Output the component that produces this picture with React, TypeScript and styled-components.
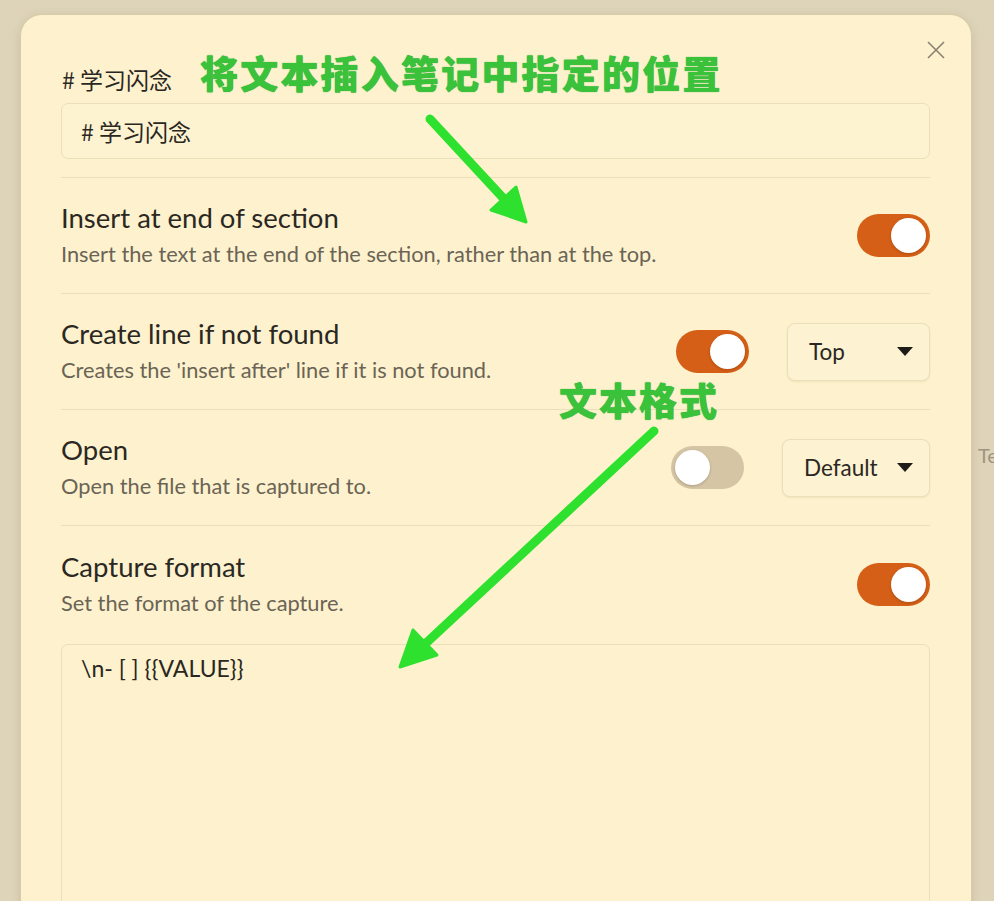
import React from "react";
import styled, { createGlobalStyle } from "styled-components";

const GlobalStyle = createGlobalStyle`
  html, body {
    margin: 0;
    padding: 0;
    background: #ded4b9;
    overflow: hidden;
  }
  body {
    font-family: Lato, "Noto Sans CJK SC", sans-serif;
    color: #2a2722;
  }
`;

type SettingProps = {
  title: string;
  desc: string;
  on: boolean;
  select?: { label: string; width: number };
  last?: boolean;
};

const settings: SettingProps[] = [
  {
    title: "Insert at end of section",
    desc: "Insert the text at the end of the section, rather than at the top.",
    on: true,
  },
  {
    title: "Create line if not found",
    desc: "Creates the 'insert after' line if it is not found.",
    on: true,
    select: { label: "Top", width: 143 },
  },
  {
    title: "Open",
    desc: "Open the file that is captured to.",
    on: false,
    select: { label: "Default", width: 148 },
  },
  {
    title: "Capture format",
    desc: "Set the format of the capture.",
    on: true,
    last: true,
  },
];

const Setting = ({ title, desc, on, select, last }: SettingProps) => {
  return (
    <SettingRow $last={last}>
      <div className="info">
        <div className="title">{title}</div>
        <div className="desc">{desc}</div>
      </div>
      <Controls>
        <Toggle $on={on}>
          <span />
        </Toggle>
        {select && (
          <Dropdown $width={select.width}>
            <span>{select.label}</span>
            <Caret />
          </Dropdown>
        )}
      </Controls>
    </SettingRow>
  );
};

const App = () => {
  return (
    <Page>
      <GlobalStyle />
      <Modal>
        <CloseButton aria-label="close">
          <svg width="18" height="18" viewBox="0 0 18 18">
            <path d="M1 1 L17 17 M17 1 L1 17" stroke="#8a8170" strokeWidth="1.6" />
          </svg>
        </CloseButton>
        <HeadingLabel># 学习闪念</HeadingLabel>
        <TextInput># 学习闪念</TextInput>
        <Divider />
        {settings.map((s) => (
          <Setting key={s.title} {...s} />
        ))}
        <FormatArea>{"\\n- [ ] {{VALUE}}"}</FormatArea>
      </Modal>
      <SidePeek>Te</SidePeek>

      <Note $x={200} $y={47} $spacing={2.2}>将文本插入笔记中指定的位置</Note>
      <Note $x={559} $y={374} $spacing={2}>文本格式</Note>
      <ArrowLayer width="994" height="901" viewBox="0 0 994 901">
        <g stroke="#2ee12e" strokeWidth="9" strokeLinecap="round" fill="#2ee12e">
          <line x1="430" y1="119" x2="505" y2="200" />
          <polygon points="526,222 491,210 516,187" strokeWidth="3" strokeLinejoin="round" />
          <line x1="654" y1="431" x2="424" y2="645" />
          <polygon points="400,667 413,630 437,655" strokeWidth="3" strokeLinejoin="round" />
        </g>
      </ArrowLayer>
    </Page>
  );
};

export default App;

const Page = styled.div`
  position: relative;
  display: flex;
  align-items: flex-start;
  width: 994px;
  height: 901px;
  overflow: hidden;
  padding: 14px 0 0 20px;
  box-sizing: border-box;
`;

const Modal = styled.div`
  position: relative;
  flex-shrink: 0;
  width: 952px;
  min-height: 960px;
  box-sizing: border-box;
  padding: 50px 41px 0 40px;
  background: #fdf2cd;
  border: 1px solid #d9cda9;
  border-radius: 22px;
  box-shadow: 0 2px 10px rgba(120, 100, 60, 0.18);
`;

const CloseButton = styled.div`
  position: absolute;
  top: 26px;
  right: 26px;
  width: 18px;
  height: 18px;
  display: flex;
`;

const HeadingLabel = styled.div`
  font-family: "Noto Sans CJK SC", sans-serif;
  font-size: 23px;
  line-height: 28px;
  color: #2a2722;
  margin-left: 1px;
`;

const TextInput = styled.div`
  margin-top: 10px;
  height: 56px;
  box-sizing: border-box;
  display: flex;
  align-items: center;
  padding: 0 19px;
  border: 1px solid #ebdfb9;
  border-radius: 7px;
  background: #fdf3d1;
  font-family: "Noto Sans CJK SC", sans-serif;
  font-size: 23px;
  color: #2a2722;
`;

const Divider = styled.div`
  margin-top: 18px;
  height: 1px;
  background: #ebdfba;
`;

const SettingRow = styled.div<{ $last?: boolean }>`
  display: flex;
  align-items: center;
  justify-content: space-between;
  height: 116px;
  box-sizing: border-box;
  border-bottom: ${(p) => (p.$last ? "none" : "1px solid #ebdfba")};

  .info {
    display: flex;
    flex-direction: column;
    padding-bottom: 2px;
  }
  .title {
    font-size: 27.5px;
    line-height: 34px;
    color: #2b2823;
  }
  .desc {
    margin-top: 5px;
    font-size: 21.8px;
    line-height: 28px;
    color: #6b6456;
  }
`;

const Controls = styled.div`
  display: flex;
  align-items: center;
  gap: 38px;
`;

const Toggle = styled.div<{ $on: boolean }>`
  width: 73px;
  height: 43px;
  box-sizing: border-box;
  padding: 4px;
  border-radius: 22px;
  display: flex;
  justify-content: ${(p) => (p.$on ? "flex-end" : "flex-start")};
  background: ${(p) => (p.$on ? "#d55f17" : "#d6c5a5")};

  span {
    width: 35px;
    height: 35px;
    border-radius: 50%;
    background: #ffffff;
    box-shadow: 0 1px 3px rgba(0, 0, 0, 0.2);
  }
`;

const Dropdown = styled.div<{ $width: number }>`
  width: ${(p) => p.$width}px;
  height: 58px;
  box-sizing: border-box;
  display: flex;
  align-items: center;
  justify-content: space-between;
  padding: 0 16px 0 21px;
  border: 1px solid #ebdfb9;
  border-radius: 8px;
  background: #fdf3d2;
  box-shadow: 0 1px 2px rgba(150, 120, 60, 0.12);
  font-size: 22.5px;
  color: #2a2722;
`;

const Caret = styled.span`
  width: 0;
  height: 0;
  border-left: 8px solid transparent;
  border-right: 8px solid transparent;
  border-top: 9px solid #1e1c19;
`;

const FormatArea = styled.div`
  margin-top: 2px;
  min-height: 300px;
  box-sizing: border-box;
  padding: 8px 19px;
  border: 1px solid #ebdfb9;
  border-radius: 7px;
  background: #fdf2cd;
  font-size: 23px;
  line-height: 30px;
  color: #2a2722;
  white-space: pre;
`;

const SidePeek = styled.div`
  margin: 429px 0 0 6px;
  font-size: 20px;
  color: #9e9580;
  white-space: nowrap;
`;

const Note = styled.div<{ $x: number; $y: number; $spacing: number }>`
  position: absolute;
  left: ${(p) => p.$x}px;
  top: ${(p) => p.$y}px;
  font-family: "Noto Sans CJK SC", sans-serif;
  font-weight: 900;
  font-size: 38px;
  line-height: 50px;
  color: #3ac23b;
  letter-spacing: ${(p) => p.$spacing}px;
  text-shadow: 0 0 1px #1f9a2a;
  white-space: nowrap;
`;

const ArrowLayer = styled.svg`
  position: absolute;
  left: 0;
  top: 0;
  pointer-events: none;
`;
